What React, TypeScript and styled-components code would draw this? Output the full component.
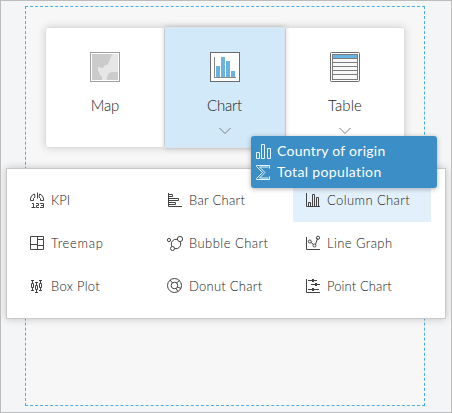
import React from "react";
import styled, { createGlobalStyle } from "styled-components";

const GlobalStyle = createGlobalStyle`
  *, *::before, *::after { box-sizing: border-box; }
  body { margin: 0; font-family: Lato, "Open Sans", sans-serif; color: #222; }
  svg { display: block; flex: none; }
`;

const Page = styled.main`
  position: relative;
  width: 452px;
  height: 413px;
  padding: 5px 5px 0;
  border: 1px solid #bcbcbc;
  background: #f4f5f7;
  overflow: hidden;
`;

const DropArea = styled.section`
  width: 400px;
  height: 400px;
  margin: 0 auto 0 19px;
  padding-top: 20px;
  border: 1px dashed #4aaeea;
  background: #f7f7f7;
`;

const CardGroup = styled.div`
  display: grid;
  grid-template-columns: repeat(3, 120px);
  width: 360px;
  height: 121px;
  margin: 0 auto;
  border-radius: 3px;
  box-shadow: 0 0 8px rgba(0, 0, 0, 0.16);
`;

const Card = styled.div<{ $active?: boolean }>`
  position: relative;
  z-index: ${(p) => (p.$active ? 1 : 0)};
  display: flex;
  flex-direction: column;
  align-items: center;
  padding-top: 24px;
  border: 1px solid ${(p) => (p.$active ? "#d8e3eb" : "#dedede")};
  border-left-width: ${(p) => (p.$active ? "0" : "1px")};
  border-radius: ${(p) => (p.$active ? "0" : "3px")};
  background: ${(p) => (p.$active ? "#d2e9f9" : "#fff")};
  box-shadow: ${(p) => (p.$active ? "0 0 5px rgba(0, 0, 0, 0.22)" : "none")};
`;

const CardLabel = styled.span<{ $spacing: number }>`
  height: 20px;
  margin-top: 13px;
  font-size: 15px;
  font-weight: 300;
  line-height: 20px;
  letter-spacing: ${(p) => p.$spacing}px;
`;

const Chevron = styled.svg`
  margin-top: 12px;
`;

const Menu = styled.div`
  position: absolute;
  top: 167px;
  left: 5px;
  z-index: 2;
  display: grid;
  grid-template-columns: repeat(3, 138px);
  grid-auto-rows: 43px;
  width: 440px;
  height: 151px;
  padding: 10px;
  border: 1px solid #c9c9c9;
  background: #fff;
  box-shadow: 0 0 8px rgba(0, 0, 0, 0.2);
`;

const MenuItem = styled.div<{ $selected?: boolean }>`
  display: flex;
  align-items: center;
  gap: 5px;
  padding-left: 12px;
  background: ${(p) => (p.$selected ? "#e2f0fb" : "transparent")};
`;

const ItemLabel = styled.span<{ $spacing: number }>`
  font-size: 13px;
  font-weight: 300;
  line-height: 17px;
  white-space: nowrap;
  letter-spacing: ${(p) => p.$spacing}px;
`;

const DragTip = styled.div`
  position: absolute;
  top: 135px;
  left: 250px;
  z-index: 3;
  display: grid;
  grid-auto-rows: 21px;
  width: 186px;
  height: 52px;
  padding: 5px;
  border-radius: 3px;
  background: #3b8ec6;
  box-shadow: 0 1px 5px rgba(0, 0, 0, 0.3);
`;

const TipRow = styled.div`
  display: flex;
  align-items: center;
  gap: 5px;
  color: #fff;
`;

const TipLabel = styled.span<{ $spacing: number }>`
  padding-bottom: 2px;
  font-size: 14px;
  line-height: 19px;
  white-space: nowrap;
  letter-spacing: ${(p) => p.$spacing}px;
`;

const MapIcon = () => (
  <svg width="30" height="30" viewBox="0 0 30 30">
    <rect x=".5" y=".5" width="29" height="29" fill="#fff" stroke="#a0a0a0" />
    <path fill="#cbcbcb" d="M2 2h26v26H2z" />
    <path
      fill="#e6e6e6"
      d="M22 2h6v18h-6l-3 1-1 2-1 2v3h-5v-3l-2-2-1-3-1-1v-4h2l1 1h2l2-3h2l2-3 1-3 1-2z"
    />
  </svg>
);

const ChartIcon = () => (
  <svg width="30" height="30" viewBox="0 0 30 30" shapeRendering="crispEdges">
    <rect x=".5" y=".5" width="29" height="29" fill="#fff" stroke="#6b6b6b" />
    <path fill="#69b3e2" d="M6 14h4v11H6zM11 5h4v20h-4zM16 9h4v16h-4zM21 19h4v6h-4z" />
    <path fill="none" stroke="#888" d="M4.500 5v20.500H26" />
  </svg>
);

const TableIcon = () => (
  <svg width="30" height="30" viewBox="0 0 30 30">
    <rect x=".5" y=".5" width="29" height="29" rx="1" fill="#fff" stroke="#6b6b6b" />
    <rect x="2.500" y="2.500" width="25" height="25" fill="#f8f8f8" stroke="#7c7c7c" />
    <path fill="#69b3e2" d="M3 3h24v3H3z" />
    <path stroke="#7c7c7c" d="M3 6.500h24M3 10.500h24M3 14.500h24M3 18.500h24M3 22.500h24" />
  </svg>
);

const Icon = ({ children }: { children: React.ReactNode }) => (
  <svg width="17" height="17" viewBox="0 0 17 17" fill="none" stroke="#444">
    {children}
  </svg>
);

const DownArrow = () => (
  <Chevron width="12" height="8" viewBox="0 0 12 8" fill="none" stroke="#757c81">
    <path d="M.5 1 6 6.500 11.500 1" />
  </Chevron>
);

const cards = [
  { label: "Map", icon: <MapIcon />, spacing: -0.1 },
  { label: "Chart", icon: <ChartIcon />, spacing: -0.2, active: true, arrow: true },
  { label: "Table", icon: <TableIcon />, spacing: 0.1, arrow: true },
];

const items = [
  {
    label: "KPI",
    spacing: 0,
    icon: (
      <>
        <path d="M4.500 8.500h-3V7q0-2 2-4L5.500 2 6 5 4.500 6.500zM11.500 8.500h3V7q0-2-2-4L10.500 2 10 5l1.500 1.500zM8.500 .5v6" />
        <path d="M3 11.500h1.500v4M2.500 15.500h4M7 11.500h2.500v2h-2v2H10M11 11.500h3.500v4H11M12 13.500h2" />
      </>
    ),
  },
  {
    label: "Bar Chart",
    spacing: 0.3,
    icon: <path d="M1.500 1v13.500H15M2 2.500h3.500v2H2M2 6.500h9.500v2H2M2 10.500h6.500v2H2" />,
  },
  {
    label: "Column Chart",
    spacing: 0.4,
    selected: true,
    icon: <path d="M1.500 1v13.500H15M3.500 14v-3.500h2V14M7.500 14V2.500h2V14M11.500 14V5.500h2V14" />,
  },
  {
    label: "Treemap",
    spacing: 0.7,
    icon: <path d="M1.500 1.500h13v13h-13zM8.500 1.500v13M1.500 9.500h7M8.500 4.500h6M8.500 10.500h6" />,
  },
  {
    label: "Bubble Chart",
    spacing: 0.46,
    icon: (
      <>
        <circle cx="9" cy="9" r="4.700" />
        <circle cx="2" cy="5" r="1.600" fill="#fff" />
        <circle cx="13" cy="4" r="2.600" fill="#fff" />
        <circle cx="5.500" cy="13.500" r="2" fill="#fff" />
      </>
    ),
  },
  {
    label: "Line Graph",
    spacing: 0.4,
    icon: (
      <>
        <path d="M1.500 2v12.500H15M6 7.500l2.500 2M10.500 9.500l2-6" />
        <circle cx="4.800" cy="6.500" r="1.500" />
        <circle cx="9.500" cy="10.500" r="1.500" />
        <circle cx="13" cy="2.800" r="1.600" />
      </>
    ),
  },
  {
    label: "Box Plot",
    spacing: 0.3,
    icon: (
      <path d="M2 2.500h3M3.500 3v3M3.500 10v2M2 12.500h3M2.500 5.500h2v4h-2zM6 4.500h3M7.500 5v3M7.500 12v2M6 14.500h3M6.500 7.500h2v4h-2zM10 2.500h3M11.500 3v3M11.500 10v2M10 12.500h3M10.500 5.500h2v4h-2z" />
    ),
  },
  {
    label: "Donut Chart",
    spacing: 0.25,
    icon: (
      <>
        <circle cx="7.500" cy="7.500" r="7" />
        <circle cx="7.500" cy="7.500" r="3.300" />
        <path d="M3 2 5.500 5M9.500 5 12.500 2.500M10.500 9l3.500 1.500M9 10.500l2 3" />
      </>
    ),
  },
  {
    label: "Point Chart",
    spacing: 0.1,
    icon: (
      <>
        <path d="M1.500 1v13.500H15M3 2.500h9M6 6.500h9M3 11.500h11" />
        <path fill="#444" stroke="none" d="M7 1h2v3H7zM10 5h2v3h-2zM7 10h2v3H7z" />
      </>
    ),
  },
];

export default function App() {
  return (
    <>
      <GlobalStyle />
      <Page>
        <DropArea>
          <CardGroup>
            {cards.map((c) => (
              <Card key={c.label} $active={c.active}>
                {c.icon}
                <CardLabel $spacing={c.spacing}>{c.label}</CardLabel>
                {c.arrow && <DownArrow />}
              </Card>
            ))}
          </CardGroup>
        </DropArea>
        <Menu>
          {items.map((item) => (
            <MenuItem key={item.label} $selected={item.selected}>
              <Icon>{item.icon}</Icon>
              <ItemLabel $spacing={item.spacing}>{item.label}</ItemLabel>
            </MenuItem>
          ))}
        </Menu>
        <DragTip>
          <TipRow>
            <svg width="16" height="17" viewBox="0 0 16 17" fill="none" stroke="#e8f5ff">
              <path d="M.5 9.500h3v6h-3zM5.500 1.500h3v14h-3zM11.500 5.500h3v10h-3z" />
            </svg>
            <TipLabel $spacing={0.26}>Country of origin</TipLabel>
          </TipRow>
          <TipRow>
            <svg width="16" height="17" viewBox="0 0 16 17" fill="none" stroke="#e8f5ff">
              <path d="M13.500 4.500v-3H.5v1l6 6-6 6v1h13v-3M12.500 3H3.500L9 8.500 3.500 14h9" />
            </svg>
            <TipLabel $spacing={0.35}>Total population</TipLabel>
          </TipRow>
        </DragTip>
      </Page>
    </>
  );
}
